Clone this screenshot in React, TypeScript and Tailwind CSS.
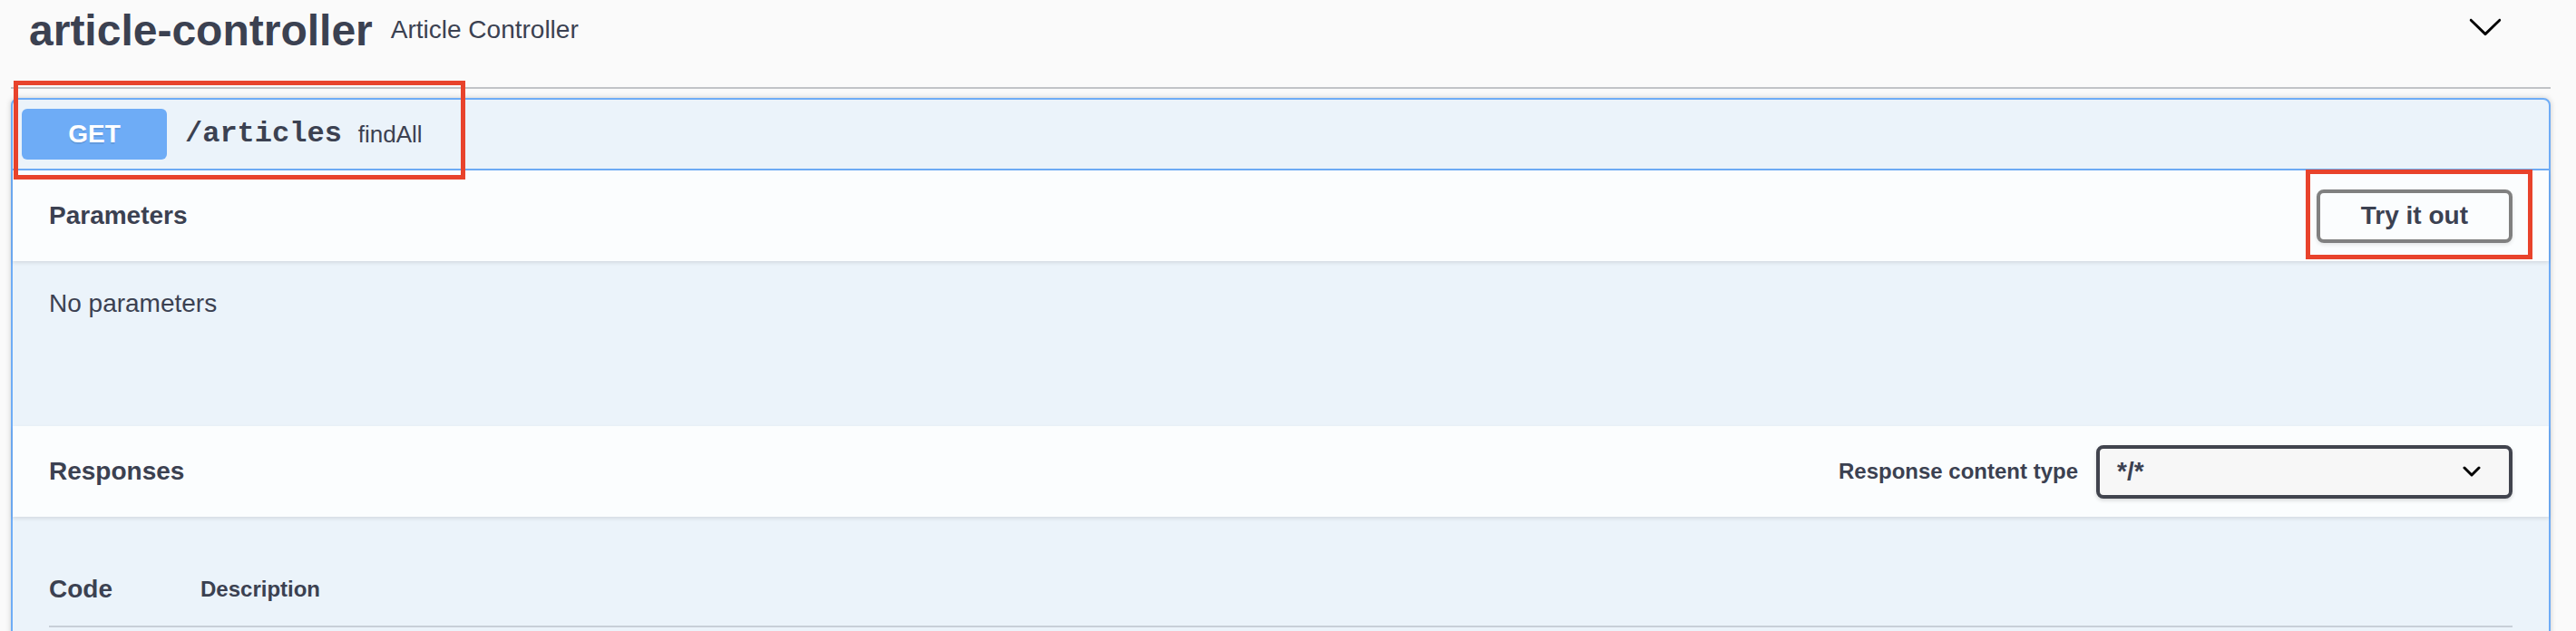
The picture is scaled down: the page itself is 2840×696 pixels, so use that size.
import React from "react";

const sans = "font-['Liberation_Sans',Arial,sans-serif]";

function TagArrow() {
  return (
    <svg width="40" height="40" viewBox="0 0 20 20" className="fill-black">
      <path d="M17.418 6.109c.272-.268.709-.268.979 0s.271.701 0 .969l-7.908 7.83c-.27.268-.707.268-.979 0l-7.908-7.83c-.27-.268-.27-.701 0-.969.271-.268.709-.268.979 0L10 13.25l7.418-7.141z" />
    </svg>
  );
}

function SelectArrow() {
  return (
    <svg width="20" height="12" viewBox="0 0 20 12" fill="none" stroke="#000" strokeWidth="3" strokeLinecap="round" strokeLinejoin="round">
      <path d="M2 2l8 8 8-8" />
    </svg>
  );
}

function SectionHeader({ children }: { children: React.ReactNode }) {
  return (
    <div className="relative flex h-[100px] items-center justify-between bg-[#fbfdfe] px-[40px] shadow-[0_2px_4px_rgba(0,0,0,0.1)]">
      {children}
    </div>
  );
}

export default function App() {
  return (
    <div className={`relative h-[696px] w-[2840px] overflow-hidden bg-[#fafafa] text-[#3b4151] ${sans}`}>
      <div className="ml-[12px] w-[2800px]">
        {/* tag title */}
        <div className="flex h-[98px] items-center border-b-2 border-[#c1c3c7] pb-[30px] pl-[20px] pr-[52px]">
          <h3 className="text-[48px] font-bold leading-[55px]">article-controller</h3>
          <small className="flex-1 px-[20px] text-[28px] leading-[32px]">Article Controller</small>
          <button className="-mt-[8px]">
            <TagArrow />
          </button>
        </div>

        {/* operation block */}
        <div className="mt-[10px] rounded-[8px] border-2 border-[#6eacf6] bg-[#ebf3fa] shadow-[0_0_6px_rgba(0,0,0,0.19)]">
          <div className="flex items-center border-b-2 border-[#6eacf6] p-[10px]">
            <span className="flex h-[56px] w-[160px] items-center justify-center rounded-[6px] bg-[#6eacf6] text-[28px] font-bold text-white [text-shadow:0_2px_0_rgba(0,0,0,0.1)]">
              GET
            </span>
            <span className="pl-[20px] pr-[18px] font-['Liberation_Mono',monospace] text-[32px] font-bold leading-[36px]">
              /articles
            </span>
            <span className="text-[26px] leading-[30px]">findAll</span>
          </div>

          <SectionHeader>
            <h4 className="text-[28px] font-bold leading-[32px]">Parameters</h4>
            <button className="flex h-[59px] items-center rounded-[8px] border-4 border-[#808080] px-[45px] text-[28px] font-bold shadow-[0_2px_4px_rgba(0,0,0,0.1)]">
              Try it out
            </button>
          </SectionHeader>

          <div className="h-[182px] px-[40px] pt-[31px]">
            <p className="text-[28px] leading-[32px]">No parameters</p>
          </div>

          <SectionHeader>
            <h4 className="text-[28px] font-bold leading-[32px]">Responses</h4>
            <div className="flex items-center">
              <span className="mr-[20px] text-[24px] font-bold leading-[28px]">Response content type</span>
              <div className="flex h-[59px] w-[459px] items-center justify-between rounded-[8px] border-4 border-[#41444e] bg-[#f7f7f7] pl-[19px] pr-[31px] shadow-[0_2px_4px_rgba(0,0,0,0.15)]">
                <span className="text-[28px] font-bold leading-[32px]">*/*</span>
                <SelectArrow />
              </div>
            </div>
          </SectionHeader>

          <div className="px-[40px] pb-[80px] pt-[40px]">
            <div className="flex h-[82px] items-center border-b-2 border-[#c8cfd8]">
              <span className="w-[167px] text-[28px] font-bold leading-[32px]">Code</span>
              <span className="text-[24px] font-bold leading-[28px]">Description</span>
            </div>
          </div>
        </div>
      </div>

      {/* annotation boxes */}
      <div className="absolute left-[15px] top-[89px] h-[109px] w-[498px] border-[5px] border-[#e8432c]" />
      <div className="absolute left-[2542px] top-[187px] h-[99px] w-[250px] border-[5px] border-[#e8432c]" />
    </div>
  );
}
